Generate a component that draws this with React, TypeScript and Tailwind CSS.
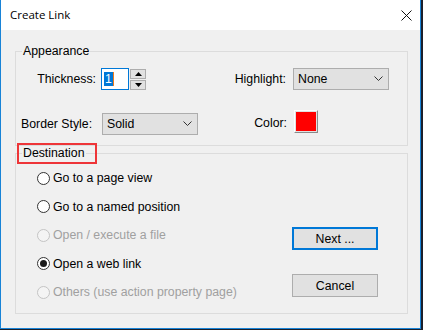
const ui = "font-['Liberation_Sans',Arial,sans-serif] text-[12.3px] leading-[14px] text-black";

function Chevron() {
  return (
    <svg width="9" height="6" viewBox="0 0 9 6" className="mr-[5px]">
      <polyline points="0.5,0.5 4.5,4.5 8.5,0.5" fill="none" stroke="#333" strokeWidth="1" />
    </svg>
  );
}

function Select({ value, width }: { value: string; width: string }) {
  return (
    <div
      className={`${width} h-[22px] flex items-center justify-between bg-[#e1e1e1] border border-[#adadad] pl-[4px]`}
    >
      <span>{value}</span>
      <Chevron />
    </div>
  );
}

function Radio({
  label,
  checked,
  disabled,
}: {
  label: string;
  checked?: boolean;
  disabled?: boolean;
}) {
  return (
    <div className="h-[28.5px] flex items-center">
      <div
        className={`w-[13px] h-[13px] rounded-full border flex items-center justify-center ${
          disabled ? 'border-[#c4c4c4] bg-[#f4f4f4]' : 'border-[#333] bg-white'
        }`}
      >
        {checked && <div className="w-[7px] h-[7px] rounded-full bg-[#1a1a1a]" />}
      </div>
      <span className={`ml-[3px] ${disabled ? 'text-[#a0a0a0]' : ''}`}>{label}</span>
    </div>
  );
}

function Button({ label, focused }: { label: string; focused?: boolean }) {
  return (
    <div
      className={`w-[86px] h-[23px] flex items-center justify-center bg-[#e1e1e1] ${
        focused ? 'border-2 border-[#0078d7]' : 'border border-[#adadad]'
      }`}
    >
      {label}
    </div>
  );
}

function SpinButton({ up }: { up?: boolean }) {
  return (
    <div className="w-[16px] h-[10px] bg-[#e1e1e1] border border-[#adadad] flex items-center justify-center">
      <svg width="7" height="4" viewBox="0 0 7 4">
        {up ? <polygon points="3.5,0 7,4 0,4" fill="#000" /> : <polygon points="0,0 7,0 3.5,4" fill="#000" />}
      </svg>
    </div>
  );
}

export default function App() {
  return (
    <div className={`w-[423px] h-[330px] bg-[#1c1f2a] ${ui}`}>
      <div className="w-[421px] h-[329px] border-l border-r border-b border-[#1883d7] bg-[#f0f0f0] flex flex-col">
        <div className="h-[30px] bg-white flex items-center justify-between pl-[9px] pr-[8px]">
          <span className="font-['Open_Sans',sans-serif] text-[11.5px] text-black">Create Link</span>
          <svg width="11" height="11" viewBox="0 0 11 11">
            <path d="M0.5 0.5 L10.5 10.5 M10.5 0.5 L0.5 10.5" stroke="#111" strokeWidth="1" />
          </svg>
        </div>

        <div className="pt-[14px] pl-[14px]">
          <fieldset className="w-[393px] border border-[#dcdcdc] pt-[10px] pb-[10px]">
            <legend className="ml-[6px] px-[1px]">Appearance</legend>
            <div className="flex items-center h-[22px]">
              <div className="w-[80px] text-right">Thickness:</div>
              <div className="ml-[5px] w-[28px] h-[22px] bg-white border border-[#0078d7] flex items-center pl-[2px]">
                <span className="bg-[#0078d7] text-white px-[1px]">1</span>
                <span className="w-[1px] h-[14px] bg-[#f07b1b]" />
              </div>
              <div className="ml-[1px] flex flex-col gap-[1px]">
                <SpinButton up />
                <SpinButton />
              </div>
              <div className="w-[140px] text-right">Highlight:</div>
              <div className="ml-[7px]">
                <Select value="None" width="w-[96px]" />
              </div>
            </div>
            <div className="flex items-start h-[25px] mt-[20px]">
              <div className="ml-[5px] w-[81px] h-[25px] flex items-center pt-[3px]">Border Style:</div>
              <div className="mt-[3px]">
                <Select value="Solid" width="w-[96px]" />
              </div>
              <div className="w-[89px] h-[25px] flex items-center justify-end">Color:</div>
              <div className="ml-[7px] w-[24px] h-[23px] border border-t-white border-l-white border-r-[#8a8a8a] border-b-[#8a8a8a] bg-[#e1e1e1] p-[1px]">
                <div className="w-full h-full bg-[#ff0000]" />
              </div>
            </div>
          </fieldset>

          <fieldset className="w-[393px] border border-[#dcdcdc] pb-[6px]">
            <legend className="ml-[6px] px-[1px] relative">
              Destination
              <span className="absolute left-[-5px] top-[-3px] w-[80px] h-[21px] border-2 border-[#ee3538]" />
            </legend>
            <div className="flex">
              <div className="flex-1 pl-[21px] pt-[4px] flex flex-col">
                <Radio label="Go to a page view" />
                <Radio label="Go to a named position" />
                <Radio label="Open / execute a file" disabled />
                <Radio label="Open a web link" checked />
                <Radio label="Others (use action property page)" disabled />
              </div>
              <div className="mr-[29px] pt-[67px] flex flex-col gap-[24px]">
                <Button label="Next ..." focused />
                <Button label="Cancel" />
              </div>
            </div>
          </fieldset>
        </div>
      </div>
    </div>
  );
}
